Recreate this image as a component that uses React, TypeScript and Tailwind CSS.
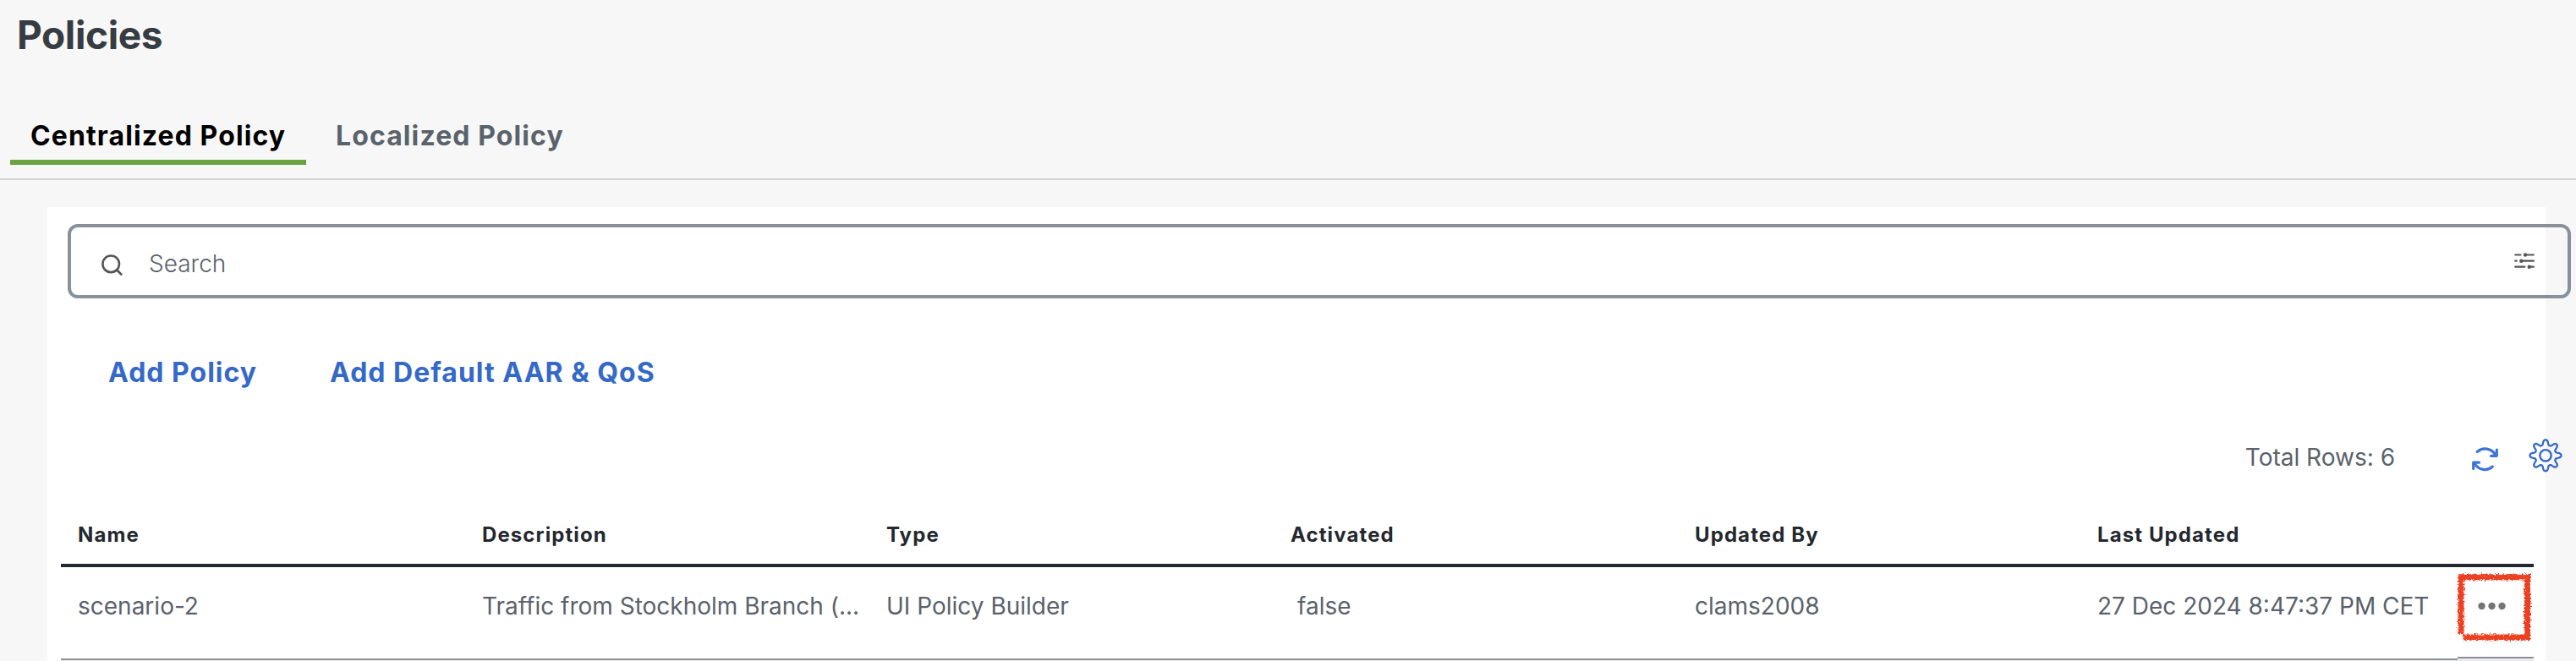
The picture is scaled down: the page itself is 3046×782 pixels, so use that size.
import React from "react";

const columns = [
  { title: "Name", value: "scenario-2" },
  { title: "Description", value: "Traffic from Stockholm Branch (..." },
  { title: "Type", value: "UI Policy Builder" },
  { title: "Activated", value: "false", indent: true },
  { title: "Updated By", value: "clams2008" },
  { title: "Last Updated", value: "27 Dec 2024 8:47:37 PM CET" },
];

const grid = "grid grid-cols-[478px_478px_478px_478px_476px_446px_90px]";

function gearPath(cx: number, cy: number) {
  const pts: string[] = [];
  for (let i = 0; i <= 160; i++) {
    const a = (i / 160) * Math.PI * 2;
    const c = Math.cos(8 * a);
    const r = 15.6 + 3.5 * Math.tanh(1.3 * (c - 0.1));
    pts.push(`${(cx + r * Math.cos(a)).toFixed(2)} ${(cy + r * Math.sin(a)).toFixed(2)}`);
  }
  return `M${pts.join("L")}Z`;
}

function Gear() {
  return (
    <svg width="40" height="40" viewBox="0 0 40 40" fill="none" stroke="#3569c8" strokeWidth="2.3" strokeLinejoin="round">
      <path d={gearPath(20, 19.8)} />
      <circle cx="20" cy="19.800" r="6.7" strokeWidth="2.4" />
    </svg>
  );
}

function Refresh() {
  return (
    <svg className="mt-2.5" width="32" height="30" viewBox="0 0 32 30" fill="none" stroke="#3d74d6" strokeWidth="3.200" strokeLinecap="round" strokeLinejoin="round">
      <path d="M6.200 5.500C12.500 0 23 .5 28 9.500" />
      <path d="M29.300 3v7.300H22.500" />
      <path d="M24.300 23C18 28.500 8 28 3 19" />
      <path d="M1.700 25.500v-7.300H8.500" />
    </svg>
  );
}

function Sliders() {
  return (
    <svg width="24" height="20" viewBox="0 0 24 20" stroke="#555" strokeWidth="2.2" strokeLinecap="round" fill="#555">
      <path d="M1.200 2.500H7.500M13 2.500H22.800M1.200 9.700H2.800M8 9.700H22.800M1.200 16.700H12.300M18 16.700H22.800" />
      <g stroke="none">
        <circle cx="13" cy="2.500" r="2.200" />
        <circle cx="8.300" cy="9.700" r="2.200" />
        <circle cx="17.700" cy="16.700" r="2.200" />
      </g>
    </svg>
  );
}

function CrayonBox() {
  return (
    <svg className="absolute -left-0.5 top-1.5" width="92" height="84" viewBox="0 0 92 84" fill="none">
      <defs>
        <filter id="crayon" x="-10%" y="-10%" width="120%" height="120%">
          <feTurbulence type="fractalNoise" baseFrequency="0.5" numOctaves="2" seed="4" result="n" />
          <feDisplacementMap in="SourceGraphic" in2="n" scale="7" xChannelSelector="R" yChannelSelector="G" />
        </filter>
      </defs>
      <path d="M6 73V5.800H84.500V77H8.500" stroke="#ec4024" strokeWidth="7" filter="url(#crayon)" />
    </svg>
  );
}

export default function App() {
  return (
    <div className="h-[782px] w-full overflow-hidden bg-[#f7f7f7] font-['Inter',sans-serif] text-[28px] leading-9 text-[#5a626c]">
      <header className="flex h-[213px] flex-col border-b-2 border-[#d0d5d9]">
        <h1 className="h-[131px] pl-5 pt-[13px] text-[46px] font-bold leading-[56px] tracking-[-0.4px] text-[#373c42]">Policies</h1>
        <nav className="flex pl-3 text-[32px] font-bold leading-[60px] tracking-[1.1px]">
          <a className="h-16 w-[350px] border-b-[6px] border-[#6aa442] pl-6 text-black">Centralized Policy</a>
          <a className="pl-[35px]">Localized Policy</a>
        </nav>
      </header>
      <main className="ml-14 mt-8 h-[537px] w-[2954px] bg-white pt-5">
        <div className="ml-6 flex h-[88px] w-[2960px] items-center rounded-xl border-4 border-[#8a9099] pl-9 pr-[39px]">
          <svg className="mt-2" width="25" height="25" viewBox="0 0 25 25" fill="none" stroke="#555" strokeWidth="2.600" strokeLinecap="round">
            <circle cx="11.200" cy="11.300" r="9.800" />
            <path d="m18.300 18.500 5 5" />
          </svg>
          <span className="grow pl-[31px] pt-1.5 font-light">Search</span>
          <Sliders />
        </div>
        <div className="flex pl-[72px] pt-[68px] text-[32px] font-bold leading-10 tracking-[1px] text-[#3569c8]">
          <a className="w-[262px]">Add Policy</a>
          <a>Add Default AAR &amp; QoS</a>
        </div>
        <div className="mt-[54px] flex h-12 w-[2974px] items-center justify-end">
          <span className="pr-[91px] pt-1">Total Rows: 6</span>
          <Refresh />
          <span className="ml-[35px]"><Gear /></span>
        </div>
        <section className="ml-4 w-[2924px]">
          <div className={`${grid} h-[108px] border-b-4 border-[#23282e] pt-[52px] text-2xl font-bold leading-9 tracking-[1.1px] text-[#23282e]`}>
            {columns.map((c) => (
              <div key={c.title} className="pl-5">{c.title}</div>
            ))}
          </div>
          <div className={`${grid} h-[111px] bg-[#ececee]`}>
            {columns.map((c) => (
              <div key={c.title} className={c.indent ? "h-[110px] whitespace-nowrap border-b-2 border-[#8a9099] bg-white pl-7 pt-7" : "h-[110px] whitespace-nowrap border-b-2 border-[#8a9099] bg-white pl-5 pt-7"}>{c.value}</div>
            ))}
            <div className="relative h-[108px] border-b-2 border-[#8a9099] bg-white pl-6 pt-[41px]">
              <CrayonBox />
              <svg width="34" height="10" viewBox="0 0 34 10" fill="#757575">
                <circle cx="4.500" cy="5" r="4.200" />
                <circle cx="16.500" cy="5" r="4.200" />
                <circle cx="28.500" cy="5" r="4.200" />
              </svg>
            </div>
          </div>
        </section>
      </main>
    </div>
  );
}
